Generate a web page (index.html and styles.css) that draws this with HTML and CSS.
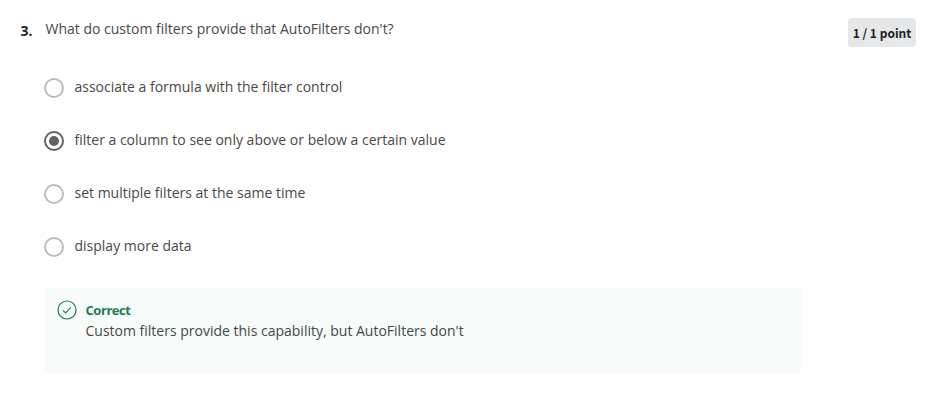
FILE: index.html
```
<!DOCTYPE html>
<html lang="en">
<head>
<meta charset="utf-8">
<title>Quiz question</title>
<link rel="stylesheet" href="styles.css">
</head>
<body>
<main class="question">
  <div class="number">3.</div>
  <div class="content">
    <p class="prompt">What do custom filters provide that AutoFilters don't?</p>
    <div class="options">
      <div class="option"><span class="radio"></span><span class="label">associate a formula with the filter control</span></div>
      <div class="option"><span class="radio checked"></span><span class="label">filter a column to see only above or below a certain value</span></div>
      <div class="option"><span class="radio"></span><span class="label">set multiple filters at the same time</span></div>
      <div class="option"><span class="radio"></span><span class="label">display more data</span></div>
    </div>
    <section class="feedback">
      <svg class="check" viewBox="0 0 20 20"><circle cx="10" cy="10" r="9"/><path d="M6 10.4l2.6 2.6 5.2-5.6"/></svg>
      <div class="message">
        <strong class="verdict">Correct</strong>
        <p class="detail">Custom filters provide this capability, but AutoFilters don't</p>
      </div>
    </section>
  </div>
  <div class="points">1 / 1 point</div>
</main>
</body>
</html>
```
FILE: styles.css
```
* { box-sizing: border-box; }
body { margin: 0; background: #fff; color: #484848; font: 14px/20px "Open Sans", sans-serif; }
p { margin: 0; }
.question { display: flex; align-items: flex-start; padding: 18px 13px 0 20px; }
.number { width: 25px; padding: 3px 0 0 0.5px; font-weight: 700; color: #1f1f1f; }
.content { width: 756px; }
.prompt { padding: 1px 0 0 0.5px; }
.options { padding-top: 38px; }
.option { display: flex; align-items: center; gap: 10px; height: 21px; margin: 0 0 32px -1px; white-space: nowrap; }
.label { padding: 0 0 2px 0.5px; }
.radio { display: grid; place-items: center; width: 20px; height: 20px; margin-top: 1px; border: 2px solid #bcbcbc; border-radius: 50%; }
.checked { border-color: #636363; }
.checked::before { content: ""; width: 10px; height: 10px; border-radius: 50%; background: #636363; }
.feedback { display: flex; gap: 8px; height: 85px; margin-top: -1px; padding: 12px; background: #f7fbfa; }
.check { width: 20px; height: 20px; fill: none; stroke: #1d7c50; stroke-width: 1.2; }
.message { padding-left: 0.5px; }
.verdict { display: block; margin-bottom: 1px; font-size: 13px; letter-spacing: -0.45px; color: #1d7c50; }
.points { width: 68px; height: 29px; margin-left: auto; padding-top: 5px; border-radius: 4px; background: #e5e7e8; color: #1f1f1f; font: 700 12px/20px "Noto Sans CJK SC", sans-serif; text-align: center; white-space: nowrap; }
```
